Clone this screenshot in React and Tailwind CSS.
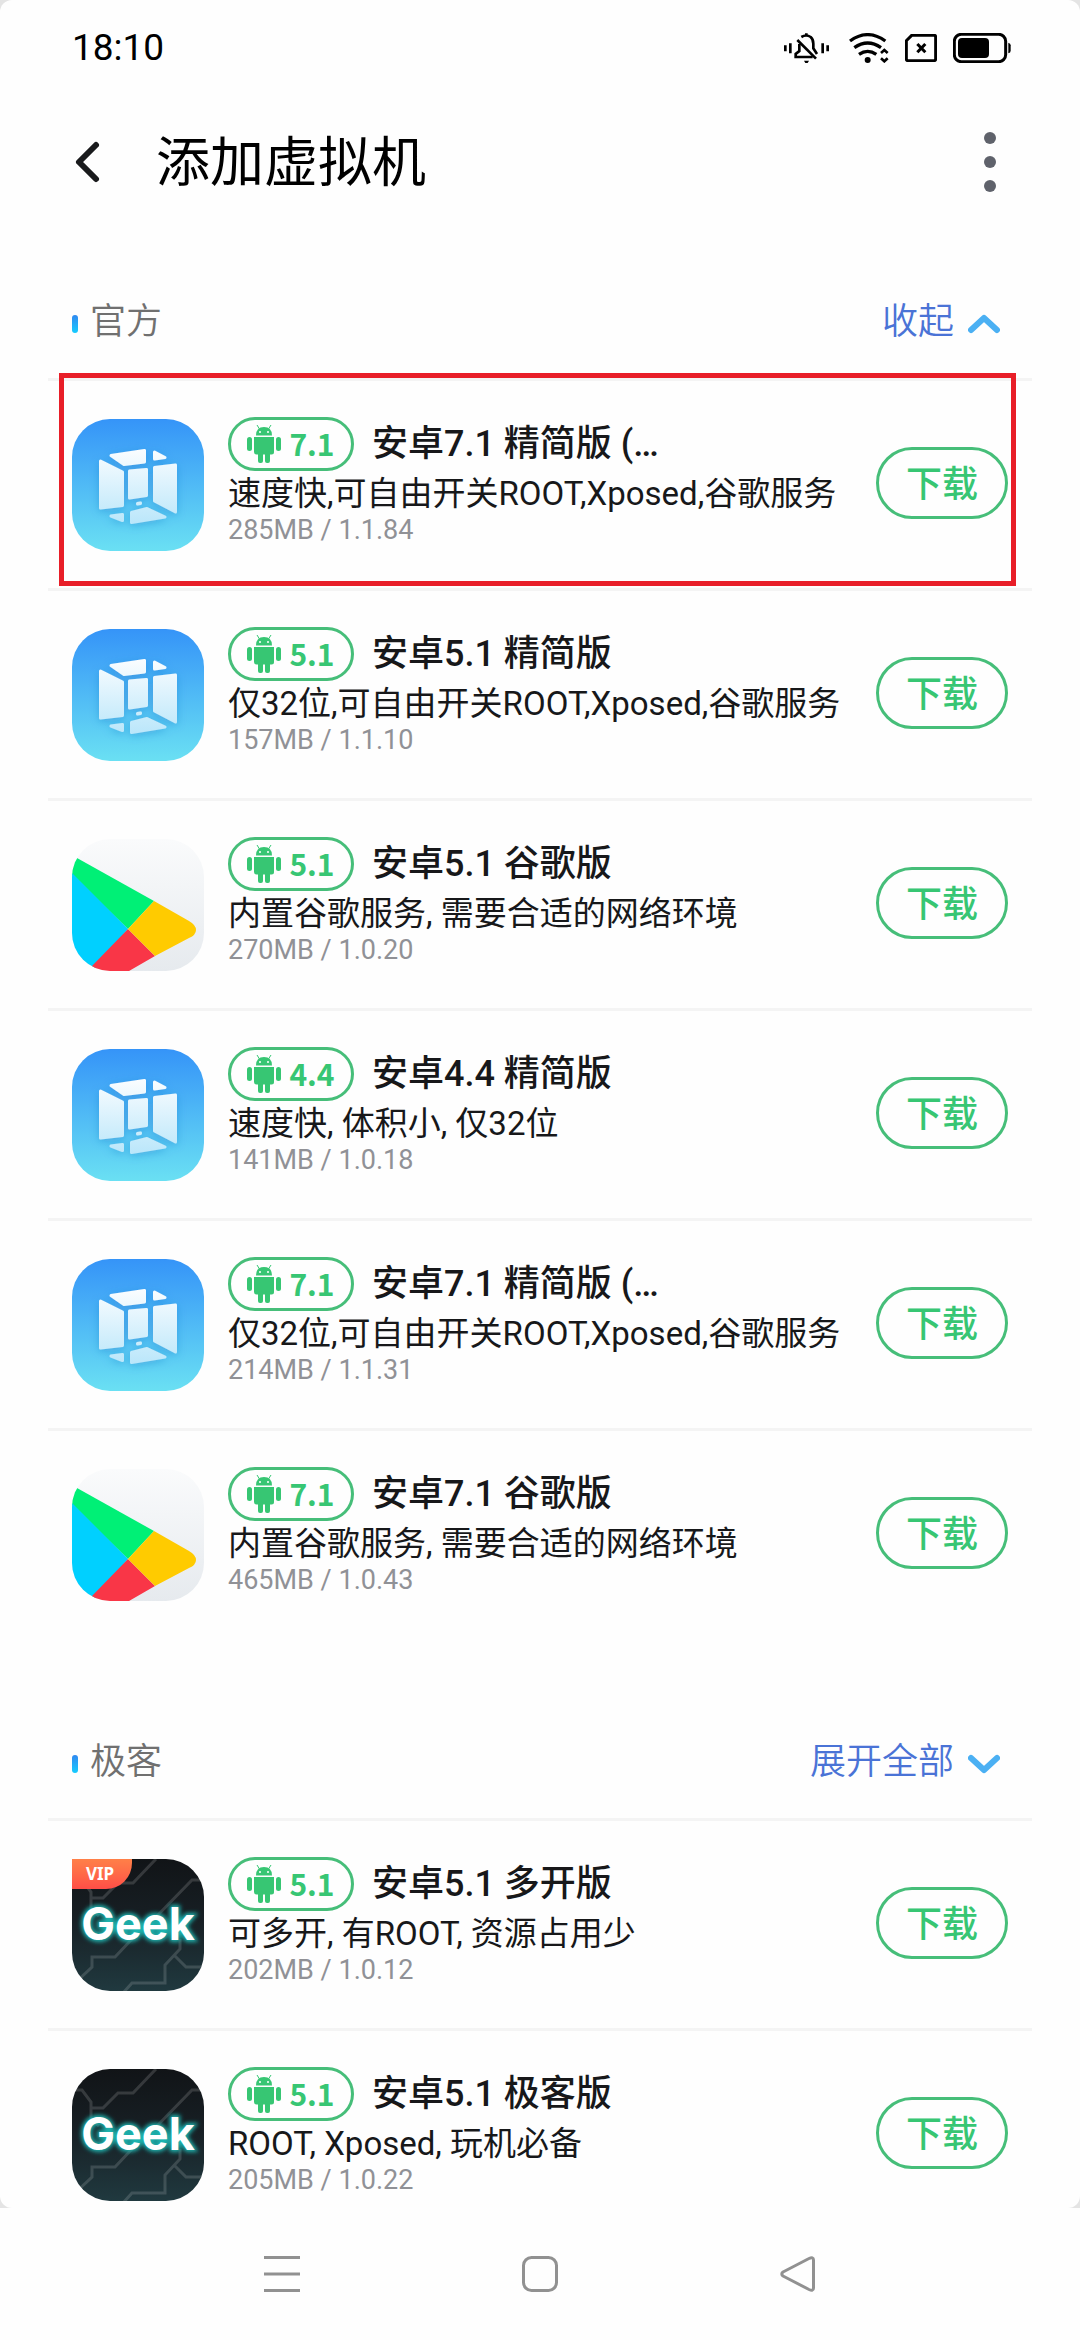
import React, { useState } from 'react';

const officialRoms = [
    { id: 1, icon: 'vm', version: '7.1', name: '安卓7.1 精简版 (…', desc: '速度快,可自由开关ROOT,Xposed,谷歌服务', size: '285MB', build: '1.1.84', selected: true },
    { id: 2, icon: 'vm', version: '5.1', name: '安卓5.1 精简版', desc: '仅32位,可自由开关ROOT,Xposed,谷歌服务', size: '157MB', build: '1.1.10' },
    { id: 3, icon: 'play', version: '5.1', name: '安卓5.1 谷歌版', desc: '内置谷歌服务, 需要合适的网络环境', size: '270MB', build: '1.0.20' },
    { id: 4, icon: 'vm', version: '4.4', name: '安卓4.4 精简版', desc: '速度快, 体积小, 仅32位', size: '141MB', build: '1.0.18' },
    { id: 5, icon: 'vm', version: '7.1', name: '安卓7.1 精简版 (…', desc: '仅32位,可自由开关ROOT,Xposed,谷歌服务', size: '214MB', build: '1.1.31' },
    { id: 6, icon: 'play', version: '7.1', name: '安卓7.1 谷歌版', desc: '内置谷歌服务, 需要合适的网络环境', size: '465MB', build: '1.0.43' },
];

const geekRoms = [
    { id: 7, icon: 'geek', vip: true, version: '5.1', name: '安卓5.1 多开版', desc: '可多开, 有ROOT, 资源占用少', size: '202MB', build: '1.0.12' },
    { id: 8, icon: 'geek', version: '5.1', name: '安卓5.1 极客版', desc: 'ROOT, Xposed, 玩机必备', size: '205MB', build: '1.0.22' },
];

const StatusBar = () => (
    <div className="flex h-24 shrink-0 items-center justify-between pl-[72px] pr-[69px] text-black">
        <span className="text-[37px] leading-[48px]">18:10</span>
        <div className="flex items-center gap-4">
            {/* Muted bell */}
            <svg viewBox="42 38 147 90" className="h-[30px] w-[49px]" fill="none" stroke="currentColor" strokeWidth="8">
                <path d="M46 75v18M61 69v30M158 69v30M173 75v18M109 39v7" />
                <path d="M94 50Q109 41 122 50Q130 57 130 70V84L141 101" />
                <path d="M88 71V92L77 101V110H128" />
                <path d="M82 59L138 115" />
                <path d="M102 121h15l-4 7h-7z" fill="currentColor" stroke="none" />
            </svg>
            {/* Wi-Fi */}
            <svg viewBox="238 38 120 90" className="h-[30px] w-[40px]" fill="none" stroke="currentColor" strokeWidth="10">
                <path d="M241 62Q294 24 347 62M254 82Q294 54 334 82M268 102Q294 84 320 102" />
                <circle cx="294" cy="119" r="9" fill="currentColor" stroke="none" />
                <path d="M334 98L344 89L354 98M334 114L344 123L354 114" strokeWidth="8" />
            </svg>
            {/* No SIM */}
            <svg viewBox="402 42 96 84" className="h-[28px] w-[32px]" fill="none" stroke="currentColor" strokeWidth="9">
                <path d="M422 46H489Q494 46 494 51V117Q494 122 489 122H411Q406 122 406 117V62Z" />
                <path d="M439 72L463 97M463 72L439 97" />
            </svg>
            {/* Battery */}
            <svg viewBox="549 39 174 90" className="h-[30px] w-[58px]">
                <rect x="553" y="43" width="154" height="82" rx="21" fill="none" stroke="currentColor" strokeWidth="9" />
                <rect x="564" y="54" width="93" height="60" rx="12" fill="currentColor" />
                <path d="M715 68Q722 70 722 76V92Q722 98 715 100Z" fill="currentColor" />
            </svg>
        </div>
    </div>
);

const Header = () => (
    <header className="flex h-[132px] shrink-0 items-center px-[72px]">
        <button type="button" aria-label="返回" className="mr-12">
            <svg viewBox="0 0 36 48" className="h-12 w-9" fill="none" stroke="#191a1c" strokeWidth="6" strokeLinecap="round" strokeLinejoin="round">
                <path d="M24 7L7 24L24 41" />
            </svg>
        </button>
        <h1 className="flex-1 pt-1 text-[54px] leading-[72px] text-black">添加虚拟机</h1>
        <button type="button" aria-label="更多">
            <svg viewBox="0 0 36 60" className="h-[60px] w-9" fill="#5f626b">
                <circle cx="18" cy="6" r="6" />
                <circle cx="18" cy="30" r="6" />
                <circle cx="18" cy="54" r="6" />
            </svg>
        </button>
    </header>
);

const VmIcon = () => (
    <svg viewBox="0 0 132 132" className="h-full w-full">
        <defs>
            <linearGradient id="vmBg" x1="0" y1="0" x2="0" y2="1">
                <stop offset="0" stopColor="#3594f8" />
                <stop offset="1" stopColor="#6ae0f3" />
            </linearGradient>
            <linearGradient id="vmPanel" gradientUnits="userSpaceOnUse" x1="0" y1="30" x2="0" y2="106">
                <stop offset="0" stopColor="#fbfdff" />
                <stop offset="1" stopColor="#b9e6fa" />
            </linearGradient>
            <filter id="vmShadow" x="-20%" y="-20%" width="140%" height="140%">
                <feDropShadow dx="0" dy="2" stdDeviation="4" floodColor="#1c6fc0" floodOpacity="0.35" />
            </filter>
        </defs>
        <rect width="132" height="132" fill="url(#vmBg)" />
        <g fill="url(#vmPanel)" stroke="url(#vmPanel)" strokeWidth="3" strokeLinejoin="round" filter="url(#vmShadow)">
            <path d="M39 36.500L72.500 31.500V43L52 45.500Z" />
            <path d="M82.500 33L93 38.500L82.500 40Z" />
            <path d="M28.500 42L50.500 53V86.500L28.500 89Z" />
            <path d="M57.500 52L74.500 50.500V76.500L57.500 79Z" />
            <path d="M82.500 48.500L103.500 46V93L82.500 82Z" />
            <path d="M65.500 84.500L68.500 84V84.500L65.500 85Z" />
            <path d="M39 97L50.500 95.500V101.500Z" />
            <path d="M59.500 93.500L75 89.500L93 98L59.500 103.500Z" />
        </g>
    </svg>
);

const PlayIcon = () => (
    <svg viewBox="0 0 132 132" className="h-full w-full">
        <defs>
            <linearGradient id="playBg" x1="0" y1="0" x2="0" y2="1">
                <stop offset="0" stopColor="#fafbfc" />
                <stop offset="1" stopColor="#e6eaee" />
            </linearGradient>
        </defs>
        <rect width="132" height="132" fill="url(#playBg)" />
        <path d="M0 19H5L82 62L56 90L0 36Z" fill="#00f076" />
        <path d="M0 34L56 90L20 132H0Z" fill="#00d0ff" />
        <path d="M56 90L83 117L57 132H15L20 127Z" fill="#f93647" />
        <path d="M82 62L117 82Q124 86 124 91Q124 96 117 99L83 117L56 90Z" fill="#ffcb00" />
    </svg>
);

const GeekIcon = () => (
    <svg viewBox="0 0 132 132" className="h-full w-full">
        <defs>
            <linearGradient id="geekBg" x1="0" y1="0" x2="0" y2="1">
                <stop offset="0" stopColor="#111417" />
                <stop offset="0.45" stopColor="#171f24" />
                <stop offset="1" stopColor="#20393f" />
            </linearGradient>
            <filter id="geekGlow" x="-20%" y="-40%" width="140%" height="180%">
                <feGaussianBlur stdDeviation="2" />
            </filter>
        </defs>
        <rect width="132" height="132" fill="url(#geekBg)" />
        <g fill="none" stroke="#ffffff" strokeOpacity="0.15" strokeWidth="3">
            <path d="M84 0L61 24H46L31 39H19V50L27 57M19 39V33L10 21H3" />
            <path d="M132 21H120L84 58" />
            <path d="M3 124L20 108V98H43L60 80" />
            <path d="M108 80V90L93 106V124H60L51 134M103 97L114 108H132" />
        </g>
        <g fontFamily="Inter, sans-serif" fontSize="45" fontWeight="700" textAnchor="middle">
            <text x="66" y="81" fill="#1fb5b0" stroke="#1fb5b0" strokeWidth="4" filter="url(#geekGlow)" aria-hidden="true">Geek</text>
            <text x="66" y="81" fill="#ffffff">Geek</text>
        </g>
    </svg>
);

const icons = { vm: VmIcon, play: PlayIcon, geek: GeekIcon };

const AndroidIcon = () => (
    <svg viewBox="0 0 34 38" className="h-[38px] w-[34px]" fill="#37c673">
        <path d="M10 0L12.500 4M24 0L21.500 4" stroke="#37c673" />
        <path d="M9 10.500Q9 2 17 2T25 10.500Z" />
        <path d="M7 12H27V27Q27 29.500 24.500 29.500H9.500Q7 29.500 7 27Z" />
        <rect x="0" y="12" width="5" height="14" rx="2.500" />
        <rect x="29" y="12" width="5" height="14" rx="2.500" />
        <rect x="11" y="26" width="5" height="12" rx="2" />
        <rect x="18" y="26" width="5" height="12" rx="2" />
        <circle cx="13" cy="7" r="1" fill="#fff" />
        <circle cx="21" cy="7" r="1" fill="#fff" />
    </svg>
);

const RomRow = ({ rom }) => {
    const Icon = icons[rom.icon];

    return (
        <li className="relative flex h-[210px] items-center border-t-[3px] border-[#f4f4f4] px-6">
            <div className="relative h-[132px] w-[132px] shrink-0">
                <div className={`h-full w-full overflow-hidden ${rom.vip ? 'rounded-[38px] rounded-tl-none' : 'rounded-[38px]'}`}>
                    <Icon />
                </div>
                {rom.vip && (
                    <span className="absolute left-0 top-0 flex h-[30px] w-[60px] items-center justify-center rounded-br-[26px] bg-linear-to-b from-[#ff8048] to-[#ff4d47] pr-1 font-['Noto_Sans'] text-[17px] font-bold text-white">VIP</span>
                )}
            </div>

            <div className="ml-6 min-w-0 flex-1 pb-[10px]">
                <div className="flex items-center gap-[18px]">
                    <span className="flex h-[54px] w-[126px] items-center justify-center gap-2 rounded-full border-[3px] border-[#46be79] font-['Noto_Sans_CJK_SC'] text-[30px] leading-[44px] font-bold text-[#37c673]">
                        <AndroidIcon />
                        <span className="pb-[2px]">{rom.version}</span>
                    </span>
                    <h3 className="truncate text-[36px] leading-[54px] font-medium text-[#17181a]">{rom.name}</h3>
                </div>
                <p className="whitespace-nowrap text-[33px] leading-[46px] text-[#17181a]">{rom.desc}</p>
                <p className="text-[27px] leading-[26px] text-[#909196]">{rom.size} / {rom.build}</p>
            </div>

            <button type="button" className="mb-1 h-[72px] w-[132px] shrink-0 rounded-full border-[3px] border-[#46be79] pt-1 text-[36px] leading-[48px] font-medium text-[#37c673]">下载</button>

            {rom.selected && (
                <div className="pointer-events-none absolute -top-2 right-4 bottom-[2px] left-[11px] border-[5px] border-[#e81e28]" />
            )}
        </li>
    );
};

const RomSection = ({ title, roms, expanded, onToggle }) => (
    <section>
        <div className="flex h-[116px] items-center justify-between px-6 pt-1">
            <h2 className="flex items-center gap-3 text-[36px] leading-[48px] font-[350] text-[#707070]">
                <span className="mt-1 h-[18px] w-[6px] rounded-full bg-linear-to-b from-[#2f88f0] to-[#14ccff]" />
                {title}
            </h2>
            <button type="button" onClick={onToggle} className="flex items-center gap-[14px] pr-2 text-[36px] leading-[48px] font-[350] text-[#4a73d6]">
                {expanded ? '收起' : '展开全部'}
                <svg viewBox="0 0 32 20" className="mt-1 h-5 w-8" fill="none" stroke="#4bb0f3" strokeWidth="6" strokeLinecap="round" strokeLinejoin="round">
                    <path d={expanded ? 'M3 16L16 4L29 16' : 'M3 4L16 16L29 4'} />
                </svg>
            </button>
        </div>
        <ul>
            {roms.map(rom => (
                <RomRow key={rom.id} rom={rom} />
            ))}
        </ul>
    </section>
);

const NavBar = () => (
    <nav className="grid h-[132px] shrink-0 grid-cols-3 place-items-center bg-[#fefefe] px-[153px]">
        <button type="button" aria-label="最近任务">
            <svg viewBox="0 0 36 36" className="h-9 w-9" stroke="#919191" strokeWidth="3">
                <path d="M0 1.500H36M0 18H36M0 34.500H36" />
            </svg>
        </button>
        <button type="button" aria-label="主屏幕">
            <svg viewBox="0 0 36 36" className="h-9 w-9" fill="none" stroke="#919191" strokeWidth="3">
                <rect x="1.500" y="1.500" width="33" height="33" rx="8" />
            </svg>
        </button>
        <button type="button" aria-label="返回上一页">
            <svg viewBox="0 0 36 36" className="h-9 w-9" fill="none" stroke="#919191" strokeWidth="3" strokeLinejoin="round">
                <path d="M3 16L29 2.500Q33.500 0.500 33.500 4V32Q33.500 35.500 29 33.500L3 20Q0.500 18 3 16Z" />
            </svg>
        </button>
    </nav>
);

const App = () => {
    const [officialOpen, setOfficialOpen] = useState(true);
    const [geekOpen, setGeekOpen] = useState(false);

    return (
        <div className="flex h-screen flex-col bg-[#e4e4e4] font-[Roboto,'Noto_Sans_CJK_SC',sans-serif]">
            <div className="flex min-h-0 flex-1 flex-col overflow-hidden rounded-[12px] bg-[#fefefe]">
                <StatusBar />
                <Header />
                <main className="flex min-h-0 flex-1 flex-col gap-16 overflow-y-auto px-12 pt-[34px] [scrollbar-width:none]">
                    <RomSection title="官方" roms={officialRoms} expanded={officialOpen} onToggle={() => setOfficialOpen(!officialOpen)} />
                    <RomSection title="极客" roms={geekRoms} expanded={geekOpen} onToggle={() => setGeekOpen(!geekOpen)} />
                </main>
            </div>
            <NavBar />
        </div>
    );
};

export default App;
